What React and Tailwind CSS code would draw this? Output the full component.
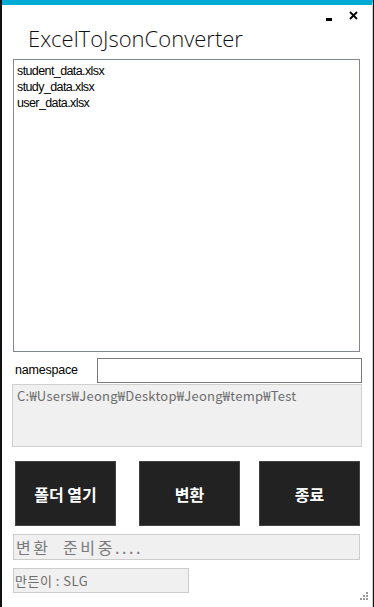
// Small WinForms-style converter window.

import React from "react";

const files = ["student_data.xlsx", "study_data.xlsx", "user_data.xlsx"];

const buttons = ["폴더 열기", "변환", "종료"];

const uiFont = { fontFamily: '"Liberation Sans", "Noto Sans CJK KR", sans-serif' };
const krFont = { fontFamily: '"Noto Sans CJK KR", "Noto Sans", sans-serif' };

const App = () => {
  return (
    <div className="flex h-[607px] w-[374px] overflow-hidden bg-[#111]">
      <div className="ml-[2px] mr-[1px] flex flex-1 flex-col border-t-[5px] border-r border-[#00acd6] border-r-[#cfcfcf] bg-white">
        {/* Window controls */}
        <div className="flex h-[17px] items-start justify-end gap-[17px] pr-[14px] pt-[5px] text-black">
          <span className="mt-[8px] block h-[3px] w-[6px] bg-black" />
          <svg width="9" height="9" viewBox="0 0 9 9" className="mt-[1px]">
            <path d="M1 1 L8 8 M8 1 L1 8" stroke="#000" strokeWidth="1.8" />
          </svg>
        </div>

        {/* Title */}
        <h1
          className="ml-[26px] mt-[2px] h-[35px] text-[22px] font-light leading-[28px] text-[#111]"
          style={{ fontFamily: '"Open Sans", sans-serif' }}
        >
          ExcelToJsonConverter
        </h1>

        {/* File list */}
        <div
          className="ml-[11px] h-[293px] w-[347px] border border-[#828790] px-[3px] pt-[3px] text-[12.5px] leading-[16px] tracking-[-0.6px] text-black"
          style={uiFont}
        >
          {files.map((f) => (
            <div key={f}>{f}</div>
          ))}
        </div>

        {/* Namespace */}
        <div className="ml-[13px] mt-[6px] flex h-[25px] items-center" style={uiFont}>
          <span className="w-[82px] text-[12.5px] tracking-[-0.2px] text-black">namespace</span>
          <div className="h-[25px] w-[265px] border border-[#7a7a7a] bg-white" />
        </div>

        {/* Path */}
        <div
          className="ml-[10px] mt-[1px] h-[63px] w-[350px] border border-[#d0d0d0] bg-[#f0f0f0] px-[4px] pt-[1px] text-[13px] tracking-[0.25px] text-[#6d6d6d]"
          style={krFont}
        >
          C:₩Users₩Jeong₩Desktop₩Jeong₩temp₩Test
        </div>

        {/* Buttons */}
        <div className="ml-[13px] mt-[14px] flex gap-[23px]">
          {buttons.map((b, i) => (
            <button
              key={b}
              className={`flex h-[65px] w-[101px] items-center justify-center border border-[#444] bg-[#222] text-[16px] font-bold text-white ${
                i === 2 ? "-ml-[4px]" : ""
              }`}
              style={krFont}
            >
              {b}
            </button>
          ))}
        </div>

        {/* Status */}
        <div
          className="ml-[11px] mt-[8px] flex h-[26px] w-[347px] items-center border border-[#cccccc] bg-[#f0f0f0] px-[2px] text-[16px] tracking-[2.6px] text-[#7a7a7a]"
          style={krFont}
        >
          변환&nbsp;&nbsp;준비중....
        </div>

        {/* Credit */}
        <div className="flex items-end justify-between">
          <div
            className="ml-[11px] mt-[8px] flex h-[25px] w-[176px] items-center border border-[#cccccc] bg-[#f0f0f0] px-[1px] text-[13px] tracking-[0.5px] text-[#6d6d6d]"
            style={krFont}
          >
            만든이 : SLG
          </div>
          <svg width="9" height="9" viewBox="0 0 9 9" className="mr-[3px] mb-[-8px]">
            <rect x="6" y="0" width="2" height="2" fill="#999" />
            <rect x="3" y="3" width="2" height="2" fill="#999" />
            <rect x="6" y="3" width="2" height="2" fill="#999" />
            <rect x="0" y="6" width="2" height="2" fill="#999" />
            <rect x="3" y="6" width="2" height="2" fill="#999" />
            <rect x="6" y="6" width="2" height="2" fill="#999" />
          </svg>
        </div>
      </div>
    </div>
  );
};

export default App;
